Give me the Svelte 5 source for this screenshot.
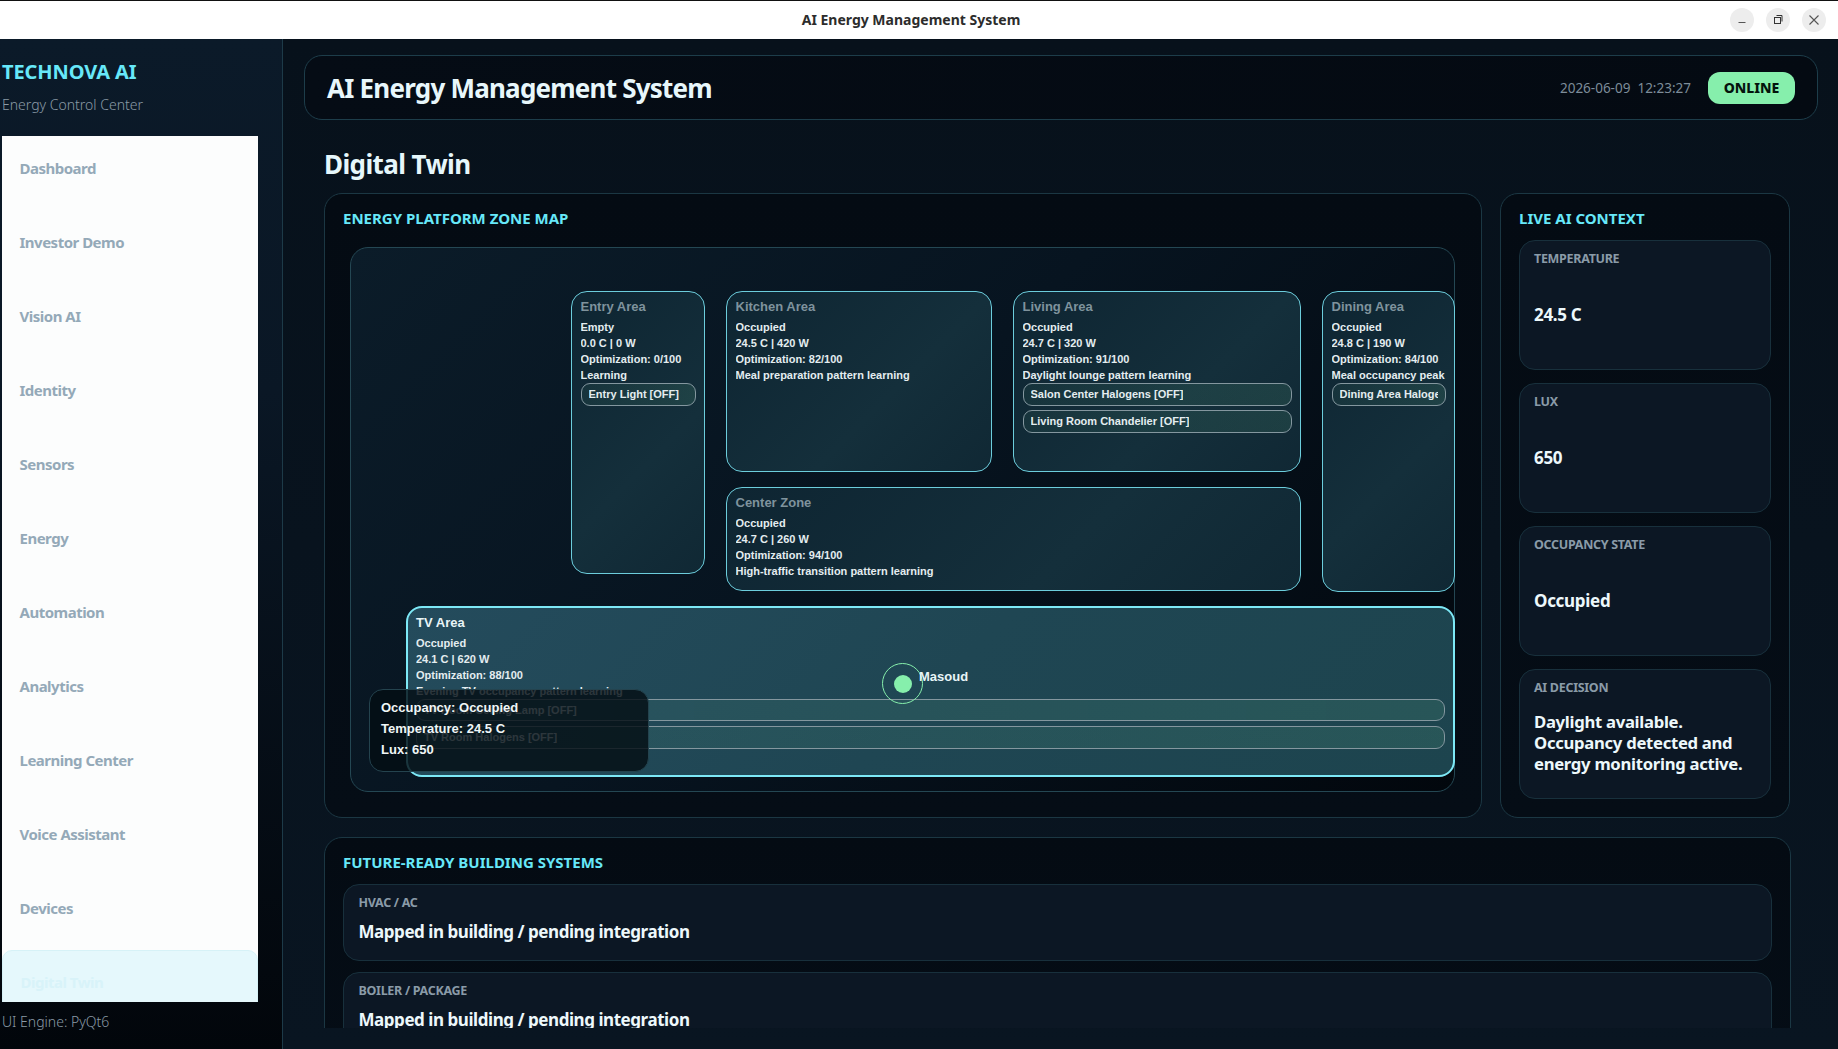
<script>
  const nav = ['Dashboard','Investor Demo','Vision AI','Identity','Sensors','Energy','Automation','Analytics','Learning Center','Voice Assistant','Devices','Digital Twin'];
  const zones = [
    { cls:'entry', name:'Entry Area', lines:['Empty','0.0 C | 0 W','Optimization: 0/100','Learning'], chips:['Entry Light [OFF]'] },
    { cls:'kitchen', name:'Kitchen Area', lines:['Occupied','24.5 C | 420 W','Optimization: 82/100','Meal preparation pattern learning'], chips:[] },
    { cls:'living', name:'Living Area', lines:['Occupied','24.7 C | 320 W','Optimization: 91/100','Daylight lounge pattern learning'], chips:['Salon Center Halogens [OFF]','Living Room Chandelier [OFF]'] },
    { cls:'center', name:'Center Zone', lines:['Occupied','24.7 C | 260 W','Optimization: 94/100','High-traffic transition pattern learning'], chips:[] },
    { cls:'dining', name:'Dining Area', lines:['Occupied','24.8 C | 190 W','Optimization: 84/100','Meal occupancy peak learning'], chips:['Dining Area Halogens [OFF]'] },
    { cls:'tv', name:'TV Area', lines:['Occupied','24.1 C | 620 W','Optimization: 88/100','Evening TV occupancy pattern learning'], chips:['TV Room Ceiling Lamp [OFF]','TV Room Halogens [OFF]'] }
  ];
  const stats = [['TEMPERATURE','24.5 C'],['LUX','650'],['OCCUPANCY STATE','Occupied']];
</script>

<div class="window">
  <header class="titlebar">
    <span class="wintitle">AI Energy Management System</span>
    <div class="winbtns">
      <button class="wb" aria-label="Minimize"><svg width="12" height="12" viewBox="0 0 12 12"><path d="M2.5 8.5h7" stroke="#555" stroke-width="1"/></svg></button>
      <button class="wb" aria-label="Restore"><svg width="12" height="12" viewBox="0 0 12 12" fill="none" stroke="#333" stroke-width="1"><rect x="2.5" y="3.5" width="6" height="6"/><path d="M4.5 1.5h5.5v6"/></svg></button>
      <button class="wb" aria-label="Close"><svg width="12" height="12" viewBox="0 0 12 12"><path d="M1.5 1.5l9 9M10.5 1.5l-9 9" stroke="#555" stroke-width="1.1"/></svg></button>
    </div>
  </header>

  <div class="body">
    <aside class="sidebar">
      <div class="brand">TECHNOVA AI</div>
      <div class="sub">Energy Control Center</div>
      <nav class="nav">
        {#each nav as item, i}
          <div class="navitem" class:active={i === nav.length - 1}>{item}</div>
        {/each}
      </nav>
      <div class="engine">UI Engine: PyQt6</div>
    </aside>

    <main class="main">
      <div class="topbar">
        <h1>AI Energy Management System</h1>
        <div class="topright">
          <span class="clock">2026-06-09&nbsp;&nbsp;12:23:27</span>
          <span class="online">ONLINE</span>
        </div>
      </div>

      <div class="scroll">
        <h2>Digital Twin</h2>
        <div class="row">
          <section class="panel mapwrap">
            <h3>ENERGY PLATFORM ZONE MAP</h3>
            <div class="map">
              {#each zones as z}
                <div class="zone {z.cls}">
                  <div class="zname">{z.name}</div>
                  {#each z.lines as l}<div class="zline">{l}</div>{/each}
                  <div class="chips">
                    {#each z.chips as c}<div class="chip"><span>{c}</span></div>{/each}
                  </div>
                </div>
              {/each}
              <div class="person"><span class="dot"></span></div>
              <span class="pname">Masoud</span>
              <div class="tooltip">
                <div>Occupancy: Occupied</div>
                <div>Temperature: 24.5 C</div>
                <div>Lux: 650</div>
              </div>
            </div>
          </section>

          <section class="panel context">
            <h3>LIVE AI CONTEXT</h3>
            <div class="cards">
              {#each stats as s}
                <div class="card stat">
                  <div class="label">{s[0]}</div>
                  <div class="value">{s[1]}</div>
                </div>
              {/each}
              <div class="card stat">
                <div class="label">AI DECISION</div>
                <div class="value decision">Daylight available. Occupancy detected and energy monitoring active.</div>
              </div>
            </div>
          </section>
        </div>

        <section class="panel future">
          <h3>FUTURE-READY BUILDING SYSTEMS</h3>
          <div class="card sys">
            <div class="label">HVAC / AC</div>
            <div class="value">Mapped in building / pending integration</div>
          </div>
          <div class="card sys">
            <div class="label">BOILER / PACKAGE</div>
            <div class="value">Mapped in building / pending integration</div>
          </div>
        </section>
      </div>
    </main>
  </div>
</div>

<style>
  :global(body) { margin: 0; background: #07111b; }
  .window {
    width: 1838px; height: 1049px; display: flex; flex-direction: column; overflow: hidden;
    font-family: "Noto Sans", "Open Sans", sans-serif;
  }
  .titlebar {
    height: 36px; flex: none; background: #fff; border-top: 1px solid #111; position: relative;
    display: flex; align-items: center; justify-content: center; padding-right: 16px; padding-bottom: 2px;
  }
  .wintitle { font-size: 14px; font-weight: 700; color: #2c2c2c; }
  .winbtns { position: absolute; right: 12px; top: 7px; display: flex; gap: 12px; }
  .wb {
    width: 24px; height: 24px; border-radius: 50%; border: 0; padding: 0; background: #ededed;
    display: flex; align-items: center; justify-content: center;
  }
  .body { flex: 1; display: flex; min-height: 0; }

  .sidebar {
    width: 283px; flex: none; box-sizing: border-box; border-right: 1px solid #1d3a48;
    background: linear-gradient(180deg, #0b1a29 0%, #0a1725 35%, #02060b 100%);
    display: flex; flex-direction: column; padding-left: 2px;
  }
  .brand { margin-top: 20px; font-size: 20px; line-height: 26px; font-weight: 700; color: #67e8f9; letter-spacing: -0.1px; }
  .sub { margin-top: 10px; font-size: 14px; line-height: 20px; color: #8a9aa6; font-weight: 300; }
  .nav {
    margin-top: 21px; width: 256px; height: 866px; background: #fcfdfd; overflow: hidden; flex: none;
  }
  .navitem {
    height: 64px; margin-bottom: 10px; box-sizing: border-box; padding-left: 17.5px;
    display: flex; align-items: center; font-size: 15px; font-weight: 700; color: #94a9b8; letter-spacing: -0.5px;
  }
  .navitem.active {
    background: #e5f8fc; border: 1px solid #d6f2f7; border-radius: 10px; color: #d8f3f9;
  }
  .engine { margin-top: 10px; font-size: 14px; line-height: 20px; color: #8a9aa6; font-weight: 300; }

  .main {
    flex: 1; min-width: 0; display: flex; flex-direction: column;
    background: linear-gradient(180deg, #07111b 0%, #091521 100%);
  }
  .topbar {
    flex: none; margin: 16px 20px 0 21px; height: 65px; box-sizing: border-box; padding: 0 22px 0 22px;
    display: flex; align-items: center; justify-content: space-between;
    border: 1px solid #1d3d4a; border-radius: 18px; background: linear-gradient(90deg, #050c15, #040a12);
  }
  h1 { margin: 0; font-size: 26px; font-weight: 700; color: #e8f7fb; letter-spacing: -0.78px; }
  .topright { display: flex; align-items: center; gap: 17px; }
  .clock { font-size: 13.5px; color: #7d8c99; }
  .online {
    width: 87px; height: 32px; border-radius: 12px; background: #86efac; color: #04130c;
    display: flex; align-items: center; justify-content: center; font-size: 14px; font-weight: 800;
  }

  .scroll {
    flex: 1; min-height: 0; overflow: hidden; margin: 0 47px 21px 41px;
  }
  h2 { margin: 0; height: 73px; box-sizing: border-box; padding-top: 24px; font-size: 26px; line-height: 40px; font-weight: 700; color: #e6f7fb; letter-spacing: -0.6px; }

  .row { display: grid; grid-template-columns: 1158px 290px; gap: 18px; height: 625px; }
  .panel {
    box-sizing: border-box; border: 1px solid #1b3743; border-radius: 18px;
    background: linear-gradient(180deg, #040b13 0%, #050d16 100%);
    padding: 0 18px;
  }
  h3 { margin: 0; padding-top: 13px; font-size: 15px; line-height: 22px; font-weight: 700; color: #67e8f9; letter-spacing: 0; }

  .mapwrap { padding: 0 26px 0 25px; }
  .mapwrap h3 { margin-left: -7px; }
  .map {
    position: relative; margin-top: 18px; width: 1105px; height: 545px; box-sizing: border-box;
    border: 1px solid #244753; border-radius: 18px;
    background: linear-gradient(135deg, #0b1c29 0%, #071420 45%, #02070d 100%);
  }
  .zone {
    position: absolute; box-sizing: border-box; padding: 5px 8.5px 0 8.5px; overflow: hidden;
    border: 1.5px solid #6ccddc; border-radius: 16px; white-space: nowrap;
    background: linear-gradient(135deg, #0e2532 0%, #142f3b 60%, #102834 100%);
    font-family: "Liberation Sans", Arial, sans-serif;
  }
  .entry { left: 220px; top: 43px; width: 134px; height: 283px; }
  .kitchen { left: 375px; top: 43px; width: 266px; height: 181px; }
  .living { left: 662px; top: 43px; width: 288px; height: 181px; }
  .center { left: 375px; top: 239px; width: 575px; height: 104px; }
  .dining { left: 971px; top: 43px; width: 133px; height: 301px; }
  .tv {
    left: 54.5px; top: 358px; width: 1049.5px; height: 171px; border: 2px solid #7de8f6;
    background: linear-gradient(135deg, #244b5c 0%, #1f4653 50%, #1d444e 100%);
    padding-left: 8.5px; padding-top: 4.5px; padding-right: 8px;
  }
  .zname { font-size: 13px; line-height: 19px; font-weight: 700; color: #7f939d; margin-bottom: 3px; }
  .tv .zname { color: #e9f5f7; }
  .zline { font-size: 11px; line-height: 16px; font-weight: 700; color: #e4edf0; overflow: hidden; }
  .chips { display: flex; flex-direction: column; gap: 4.5px; margin-top: 0; }
  .chip {
    height: 22.5px; box-sizing: border-box; border: 1px solid #84979f; border-radius: 9px;
    padding: 0 7px; display: flex; align-items: center; overflow: hidden;
    background: linear-gradient(90deg, rgba(134,239,172,.05), rgba(134,239,172,.1));
    font-size: 11px; font-weight: 700; color: #e4edf0;
  }
  .chip span { overflow: hidden; display: block; }
  .tv .chips { margin-top: 0; gap: 5px; }

  .person {
    position: absolute; left: 531px; top: 415px; width: 41px; height: 41px; box-sizing: border-box;
    border: 1.5px solid #86efac; border-radius: 50%; display: flex; align-items: center; justify-content: center;
  }
  .dot { width: 18px; height: 18px; border-radius: 50%; background: #86efac; }
  .pname {
    position: absolute; left: 568px; top: 420px; font-family: "Liberation Sans", Arial, sans-serif;
    font-size: 13px; line-height: 18px; font-weight: 700; color: #e8f5f7;
  }
  .tooltip {
    position: absolute; left: 18px; top: 441px; width: 280px; height: 83px; box-sizing: border-box;
    padding: 7px 11px; border: 1px solid #24434e; border-radius: 14px; background: rgba(4, 14, 20, .82);
    font-family: "Liberation Sans", Arial, sans-serif; font-size: 13px; line-height: 21px; font-weight: 700; color: #f0f6f7;
  }

  .context { padding: 0 18px; }
  .cards { margin-top: 11px; display: flex; flex-direction: column; gap: 13px; }
  .card { box-sizing: border-box; border: 1px solid #18303c; border-radius: 16px; background: #0c1724; }
  .stat { height: 130px; padding: 0 14px; display: flex; flex-direction: column; }
  .label { margin-top: 9px; font-size: 12.5px; line-height: 18px; font-weight: 700; color: #8a9ba8; letter-spacing: -0.3px; }
  .value { font-size: 17px; font-weight: 700; color: #edf8fb; letter-spacing: -0.3px; }
  .stat .value { flex: 1; display: flex; align-items: center; padding-bottom: 9px; }
  .stat .decision { line-height: 21px; padding: 0 0 11px; font-size: 16.7px; }

  .row + .future { margin-top: 19px; }
  .future { padding-bottom: 18px; }
  .future .card { margin-top: 11px; height: 77px; padding: 0 14.5px; }
  .sys .value { margin-top: 8px; line-height: 24px; letter-spacing: -0.45px; }
</style>
